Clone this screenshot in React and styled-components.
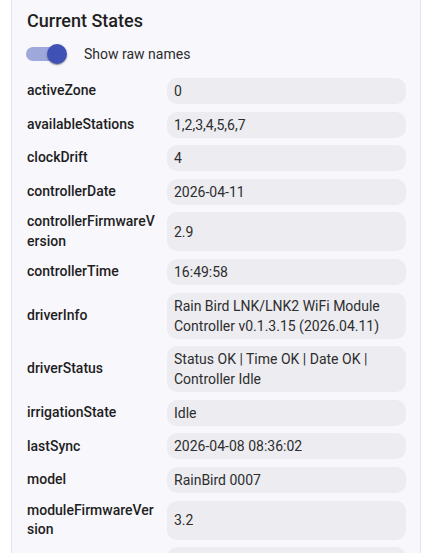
import React, { useState } from "react";
import styled, { createGlobalStyle } from "styled-components";

const GlobalStyle = createGlobalStyle`
    html, body {
        margin: 0;
        padding: 0;
        background: #ffffff;
        font-family: Roboto, "Noto Sans", sans-serif;
        overflow: hidden;
    }
`;

const Page = styled.div`
    padding: 0 9px 0 11px;
    height: 553px;
    overflow: hidden;
`;

const Panel = styled.section`
    margin-top: -10px;
    background: #f8f7fc;
    border: 1px solid #e4e3ea;
    border-radius: 10px;
    padding: 18px 14px 20px 15px;
`;

const Title = styled.h2`
    margin: 0;
    font-size: 18px;
    line-height: 24px;
    font-weight: 500;
    color: #1f1f1f;
`;

const ToggleRow = styled.label`
    display: flex;
    align-items: center;
    height: 28px;
    margin-top: 7px;
    margin-bottom: 10px;
    cursor: pointer;
`;

const Track = styled.span`
    position: relative;
    display: inline-block;
    width: 34px;
    height: 14px;
    border-radius: 7px;
    background: ${(p) => (p.$on ? "#9fa8da" : "#bdbdbd")};
    margin-left: -1px;
`;

const Thumb = styled.span`
    position: absolute;
    top: -3px;
    left: ${(p) => (p.$on ? "21px" : "-3px")};
    width: 20px;
    height: 20px;
    border-radius: 50%;
    background: ${(p) => (p.$on ? "#3f51b5" : "#fafafa")};
    box-shadow: 0 2px 1px -1px rgba(0, 0, 0, 0.2), 0 1px 1px 0 rgba(0, 0, 0, 0.14),
        0 1px 3px 0 rgba(0, 0, 0, 0.2);
`;

const ToggleText = styled.span`
    margin-left: 24px;
    font-size: 14px;
    color: #2b2b2b;
`;

const Grid = styled.div`
    display: grid;
    grid-template-columns: 130px 1fr;
    column-gap: 10px;
    row-gap: 7.6px;
`;

const Key = styled.div`
    display: flex;
    align-items: center;
    font-size: 14px;
    line-height: 19.5px;
    font-weight: 500;
    color: #1e1e1e;
    word-break: break-all;
    min-height: 26px;
`;

const Value = styled.div`
    display: flex;
    align-items: center;
    background: #ececf1;
    border-radius: 10px;
    padding: 3px 7px;
    min-height: 20px;
    font-size: 14px;
    line-height: 20px;
    color: #2e2e2e;
`;

const states = [
    ["activeZone", "0"],
    ["availableStations", "1,2,3,4,5,6,7"],
    ["clockDrift", "4"],
    ["controllerDate", "2026-04-11"],
    ["controllerFirmwareVersion", "2.9"],
    ["controllerTime", "16:49:58"],
    ["driverInfo", "Rain Bird LNK/LNK2 WiFi Module Controller v0.1.3.15 (2026.04.11)"],
    ["driverStatus", "Status OK | Time OK | Date OK | Controller Idle"],
    ["irrigationState", "Idle"],
    ["lastSync", "2026-04-08 08:36:02"],
    ["model", "RainBird 0007"],
    ["moduleFirmwareVersion", "3.2"],
    ["networkName", "RainBird"],
];

export default function App() {
    const [raw, setRaw] = useState(true);

    return (
        <Page>
            <GlobalStyle />
            <Panel>
                <Title>Current States</Title>
                <ToggleRow onClick={() => setRaw(!raw)}>
                    <Track $on={raw}>
                        <Thumb $on={raw} />
                    </Track>
                    <ToggleText>Show raw names</ToggleText>
                </ToggleRow>
                <Grid>
                    {states.map(([k, v]) => (
                        <React.Fragment key={k}>
                            <Key>{k}</Key>
                            <Value>{v}</Value>
                        </React.Fragment>
                    ))}
                </Grid>
            </Panel>
        </Page>
    );
}
